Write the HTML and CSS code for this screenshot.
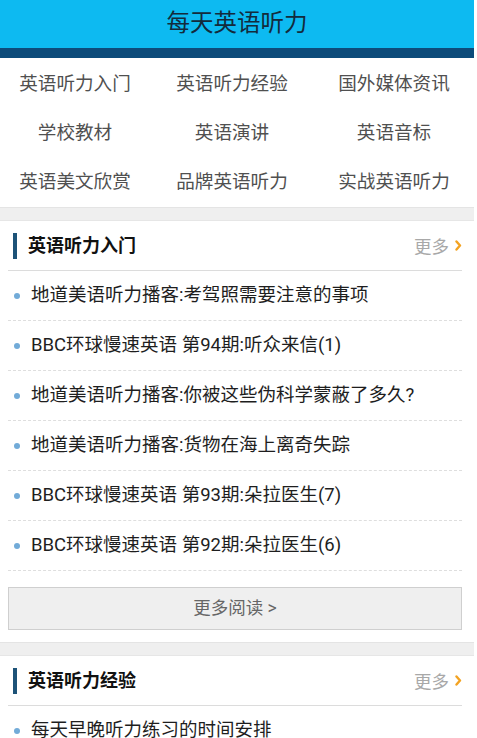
FILE: index.html
```html
<!DOCTYPE html>
<html lang="zh-CN">
<head>
  <meta charset="UTF-8" />
  <title>每天英语听力</title>
  <link rel="stylesheet" href="styles.css">
</head>
<body>
  <div class="page">
    <div class="top">每天英语听力</div>

    <div class="nav">
      <a>英语听力入门</a>
      <a>英语听力经验</a>
      <a>国外媒体资讯</a>
      <a>学校教材</a>
      <a>英语演讲</a>
      <a>英语音标</a>
      <a>英语美文欣赏</a>
      <a>品牌英语听力</a>
      <a>实战英语听力</a>
    </div>

    <div class="gap"></div>

    <div class="block">
      <div class="block-head">
        <span class="block-title">英语听力入门</span>
        <a class="more">更多<svg width="7" height="11" viewBox="0 0 7 11"><path d="M1.5 1.5 L5 5.5 L1.5 9.5" fill="none" stroke="#f3a322" stroke-width="2.4" stroke-linecap="round" stroke-linejoin="round"/></svg></a>
      </div>
      <ul class="list">
        <li>地道美语听力播客:考驾照需要注意的事项</li>
        <li>BBC环球慢速英语 第94期:听众来信(1)</li>
        <li>地道美语听力播客:你被这些伪科学蒙蔽了多久?</li>
        <li>地道美语听力播客:货物在海上离奇失踪</li>
        <li>BBC环球慢速英语 第93期:朵拉医生(7)</li>
        <li>BBC环球慢速英语 第92期:朵拉医生(6)</li>
      </ul>
      <div class="read-more">更多阅读 &gt;</div>
    </div>

    <div class="gap"></div>

    <div class="block">
      <div class="block-head">
        <span class="block-title">英语听力经验</span>
        <a class="more">更多<svg width="7" height="11" viewBox="0 0 7 11"><path d="M1.5 1.5 L5 5.5 L1.5 9.5" fill="none" stroke="#f3a322" stroke-width="2.4" stroke-linecap="round" stroke-linejoin="round"/></svg></a>
      </div>
      <ul class="list">
        <li>每天早晚听力练习的时间安排</li>
      </ul>
    </div>
  </div>
</body>
</html>
```

FILE: styles.css
```css
body {
  margin: 0;
  background: #fff;
  font-family: Roboto, "Noto Sans CJK SC", sans-serif;
  color: #222;
}
.page {
  width: 474px;
}
.top {
  height: 48px;
  line-height: 46px;
  background: #0dbaf1;
  border-bottom: 10px solid #0d4b7a;
  text-align: center;
  font-size: 23.5px;
  color: #132b3c;
}
.nav {
  display: grid;
  grid-template-columns: 150px 164px 160px;
  padding-top: 2px;
}
.nav a {
  height: 49px;
  line-height: 49px;
  text-align: center;
  font-size: 18.6px;
  color: #505050;
}
.gap {
  height: 12px;
  background: #efefef;
  border-top: 1px solid #e4e4e4;
  border-bottom: 1px solid #e6e6e6;
}
.block {
  padding: 0 12px 12px 8px;
}
.block-head {
  display: flex;
  align-items: center;
  justify-content: space-between;
  height: 49px;
  border-bottom: 1px solid #dcdcdc;
}
.block-title {
  border-left: 4px solid #1d5378;
  margin-left: 5px;
  padding-left: 11px;
  height: 26px;
  line-height: 26px;
  font-size: 18px;
  font-weight: bold;
  color: #111;
}
.more {
  display: flex;
  align-items: center;
  gap: 6px;
  font-size: 17.5px;
  color: #a8a8a8;
}
.list {
  list-style: none;
  margin: 0;
  padding: 0;
}
.list li {
  position: relative;
  height: 49px;
  line-height: 49px;
  border-bottom: 1px dashed #dedede;
  padding-left: 23px;
  font-size: 18.5px;
  color: #1e1e1e;
  white-space: nowrap;
}
.list li::before {
  content: "";
  position: absolute;
  left: 6px;
  top: 22px;
  width: 6px;
  height: 6px;
  border-radius: 50%;
  background: #72abd8;
}
.read-more {
  margin-top: 16px;
  height: 41px;
  line-height: 41px;
  background: #efefef;
  border: 1px solid #cfcfcf;
  text-align: center;
  font-size: 17.5px;
  color: #666;
}
```
